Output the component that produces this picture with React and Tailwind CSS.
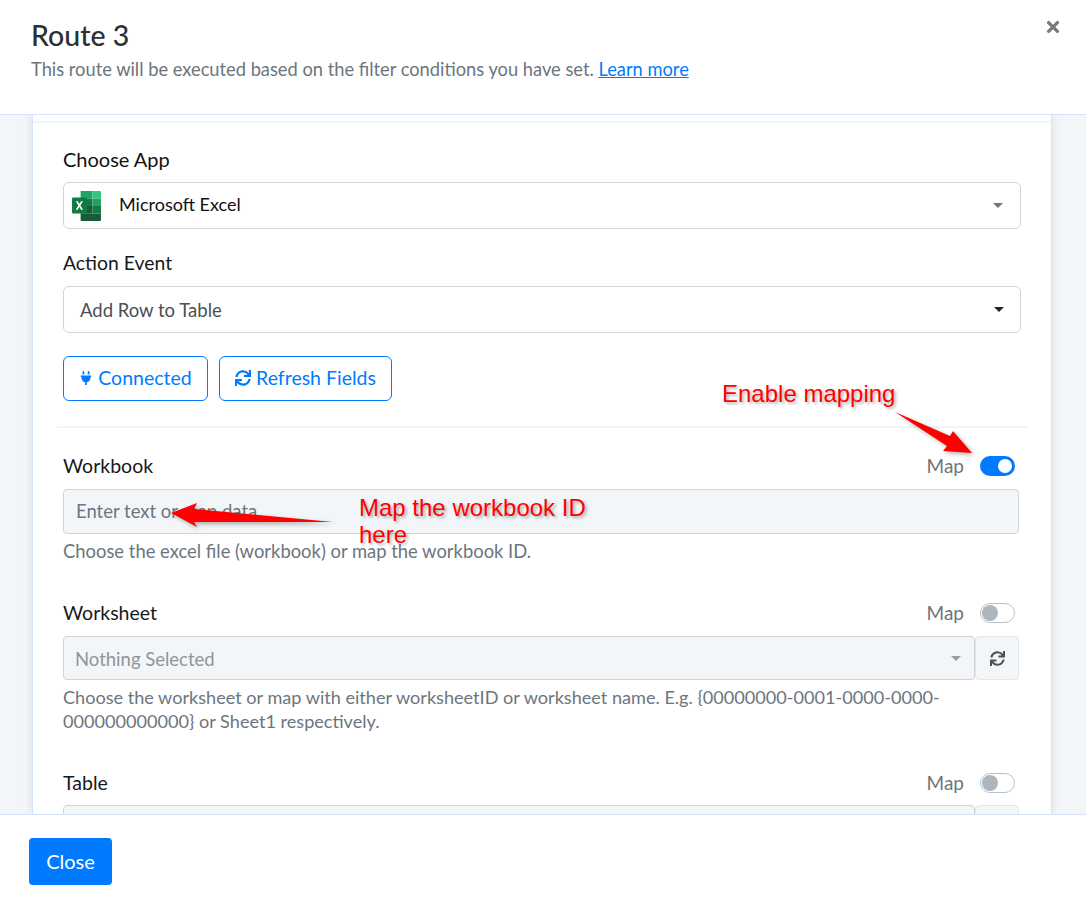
import { FaPlug, FaSync, FaTimes } from "react-icons/fa";

const font = { fontFamily: 'Lato, sans-serif' };

function Caret({ className }) {
  return (
    <svg width="10" height="5" viewBox="0 0 10 5" className={className}>
      <path d="M0 0h10L5 5z" fill="currentColor" />
    </svg>
  );
}

function ExcelLogo() {
  return (
    <svg width="31" height="30" viewBox="1 1 27 28">
      <path d="M9 1h11v7H9z" fill="#21a366" />
      <path d="M20 1h7a1 1 0 0 1 1 1v6h-8z" fill="#33c481" />
      <path d="M9 8h11v7H9z" fill="#107c41" />
      <path d="M20 8h8v7h-8z" fill="#21a366" />
      <path d="M9 15h11v7H9z" fill="#185c37" />
      <path d="M20 15h8v7h-8z" fill="#107c41" />
      <path d="M9 22h19v6a1 1 0 0 1-1 1H10a1 1 0 0 1-1-1z" fill="#185c37" />
      <rect x="1" y="7" width="14" height="15" rx="1" fill="#107c41" />
      <path d="M4.500 10.500h1.900l1.500 2.700 1.500-2.700h1.800l-2.400 4 2.500 4h-1.900l-1.600-2.800-1.600 2.800H4.400l2.500-4z" fill="#fff" />
    </svg>
  );
}

function Toggle({ on }) {
  return on ? (
    <div className="flex h-[20px] w-[35px] items-center justify-end rounded-full bg-[#007bff] pr-[3px]">
      <div className="h-[14px] w-[14px] rounded-full bg-white" />
    </div>
  ) : (
    <div className="flex h-[20px] w-[35px] items-center rounded-full border border-[#b9c0c7] bg-white pl-[1px]">
      <div className="h-[16px] w-[16px] rounded-full bg-[#adb5bd]" />
    </div>
  );
}

function FieldLabel({ label, on }) {
  return (
    <div className="flex h-[24px] items-center justify-between pt-[2px]">
      <span className="text-[19.5px] text-[#16191c]">{label}</span>
      <div className="mr-[6px] flex items-center gap-[16px]">
        <span className="text-[19px] text-[#6c757d]">Map</span>
        <Toggle on={on} />
      </div>
    </div>
  );
}

function DisabledSelect({ text }) {
  return (
    <div className="mt-[12px] mr-[2px] flex h-[44px]">
      <div className="flex flex-1 items-center justify-between rounded-[4px] border border-[#ced4da] bg-[#f3f6f9] pr-[13px] pl-[11px]">
        <span className="pt-[3px] text-[18.5px] text-[#8f959b]">{text}</span>
        <Caret className="text-[#9a9ea3]" />
      </div>
      <div className="flex w-[44px] items-center justify-center rounded-[4px] border border-[#e2e6ea] bg-[#f3f6f9] text-[#495057]">
        <FaSync size={15} />
      </div>
    </div>
  );
}

export default function App() {
  return (
    <div className="flex h-[907px] w-full flex-col overflow-hidden bg-white" style={font}>
      <header className="relative h-[115px] shrink-0 border-b border-[#d5e3fb] pt-[16px] pl-[31px]">
        <h1 className="text-[28.5px] leading-[38px] font-medium text-[#2b2f33]">Route 3</h1>
        <p className="mt-[3px] text-[18.3px] leading-[24px] text-[#6c757d]">
          This route will be executed based on the filter conditions you have set.{" "}
          <span className="text-[#007bff] underline">Learn more</span>
        </p>
        <FaTimes size={18} className="absolute top-[18px] right-[24px] text-[#7a7a7a]" />
      </header>

      <main className="min-h-0 flex-1 overflow-hidden bg-[#f3f6f9] pr-[34px] pl-[32px]">
        <div className="h-full border-x border-[#d5e3fb] bg-white px-[30px] pt-[6px] shadow-[0_0_8px_rgba(160,175,200,0.35)]">
          <div className="-mx-[30px] h-[2px] bg-[#f0f5fb]" />

          <div className="pt-[23px] text-[20px] leading-[26px] text-[#111]">Choose App</div>
          <div className="mt-[10px] flex h-[47px] items-center justify-between rounded-[6px] border border-[#ced4da] pr-[17px] pl-[7px]">
            <div className="flex items-center gap-[17px]">
              <ExcelLogo />
              <span className="pb-[3px] text-[18px] text-[#111]">Microsoft Excel</span>
            </div>
            <Caret className="text-[#6c757d]" />
          </div>

          <div className="mt-[22px] text-[19.4px] leading-[24px] text-[#16191c]">Action Event</div>
          <div className="mt-[11px] flex h-[47px] items-center justify-between rounded-[6px] border border-[#ced4da] px-[16px]">
            <span className="pt-[3px] text-[18.5px] text-[#495057]">Add Row to Table</span>
            <Caret className="text-[#212529]" />
          </div>

          <div className="mt-[23px] flex gap-[11px]">
            <button className="flex h-[45px] w-[145px] items-center justify-center gap-[5px] rounded-[6px] border border-[#007bff] pb-[2px] text-[19.5px] text-[#007bff]">
              <FaPlug size={14} />
              Connected
            </button>
            <button className="flex h-[45px] w-[173px] items-center justify-center gap-[5px] rounded-[6px] border border-[#007bff] pb-[2px] text-[19.5px] text-[#007bff]">
              <FaSync size={16} />
              Refresh Fields
            </button>
          </div>

          <div className="-mx-[6px] mt-[25px] h-[2px] bg-[#f0f5fb]" />

          <div className="mt-[25px]">
            <FieldLabel label="Workbook" on />
          </div>
          <div className="mt-[12px] mr-[2px] flex h-[45px] items-center rounded-[4px] border border-[#ced4da] bg-[#f3f6f9] pl-[12px]">
            <span className="text-[18.5px] text-[#6c757d]">Enter text or map data.</span>
          </div>
          <p className="mt-[5px] text-[18.4px] leading-[24px] text-[#6c757d]">
            Choose the excel file (workbook) or map the workbook ID.
          </p>

          <div className="mt-[37px]">
            <FieldLabel label="Worksheet" />
          </div>
          <DisabledSelect text="Nothing Selected" />
          <p className="mt-[5px] w-[900px] text-[18.1px] leading-[24px] text-[#6c757d]">
            Choose the worksheet or map with either worksheetID or worksheet name. E.g. {"{00000000-0001-0000-0000-"}
            <br />
            {"000000000000}"} or Sheet1 respectively.
          </p>

          <div className="mt-[37px] h-[23px]">
            <FieldLabel label="Table" />
          </div>
          <DisabledSelect text="" />
        </div>
      </main>

      <footer className="flex h-[93px] shrink-0 items-start border-t border-[#d5e3fb] bg-white pt-[23px] pl-[29px]">
        <button className="h-[47px] w-[83px] rounded-[4px] bg-[#007bff] pb-[2px] text-[20px] text-white">Close</button>
      </footer>

      {/* annotations drawn over the screenshot */}
      <div
        className="absolute top-[380px] left-[722px] text-[24px] leading-[28px] text-[#f00] [text-shadow:2px_2px_3px_rgba(0,0,0,0.3)]"
        style={{ fontFamily: '"Liberation Sans", sans-serif' }}
      >
        Enable mapping
      </div>
      <div
        className="absolute top-[494px] left-[359px] w-[260px] text-[24px] leading-[27px] text-[#f00] [text-shadow:2px_2px_3px_rgba(0,0,0,0.3)]"
        style={{ fontFamily: '"Liberation Sans", sans-serif' }}
      >
        Map the workbook ID here
      </div>
      <svg width="1086" height="907" className="pointer-events-none absolute top-0 left-0 drop-shadow-[2px_2px_2px_rgba(0,0,0,0.3)]">
        <path d="M895 412L950 436L953 431L972 453L943 451L947 446z" fill="#f00" />
        <path d="M171 513L197 503L194 509L333 522L194 522L197 527z" fill="#f00" />
      </svg>
    </div>
  );
}
